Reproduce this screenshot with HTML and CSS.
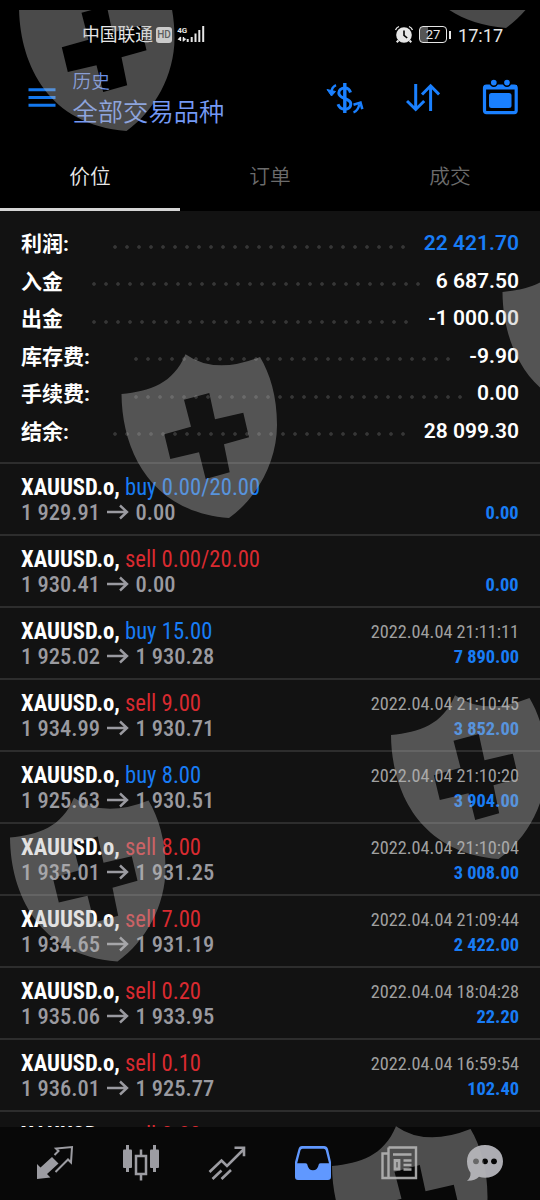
FILE: index.html
```html
<!DOCTYPE html>
<html lang="zh-CN">
<head>
<meta charset="utf-8">
<title>历史</title>
<link rel="stylesheet" href="styles.css">
</head>
<body>
<div class="app">
  <div class="status">
    <span class="carrier">中国联通</span>
    <span class="hd">HD</span>
    <svg class="signal" width="28" height="18" viewBox="177 25 28 18">
      <text x="177.200" y="32.800" class="net" textLength="10" lengthAdjust="spacingAndGlyphs">4G</text>
      <path d="M180.500 37v4M183.500 37v4" class="w1"/><path d="M177.500 39.500l3-3v4zM182.800 37.500l3.600 1.500-3.600 3z" fill="#e6e6e6"/>
      <path d="M187.700 39v3M191.700 37v5M195.500 33.500v8.500M199.300 30v12M203.200 26v16" class="w2"/>
    </svg>
    <svg class="alarm" width="20" height="20" viewBox="394 25 20 20">
      <circle cx="404" cy="35" r="7.800" fill="#e6e6e6"/>
      <path d="M398.500 40.500l-1.800 1.800M409.500 40.500l1.800 1.800" class="w2"/>
      <path d="M395.500 30q1-2.500 3.500-3.500M412.500 30q-1-2.500-3.500-3.500" class="w1"/>
      <path d="M404 30.500v4.800l3.200 2.700" fill="none" stroke="#000" stroke-width="1.600"/>
    </svg>
    <span class="battery">27</span><span class="nub"></span>
    <span class="clock">17:17</span>
  </div>

  <div class="header">
    <svg class="menu" width="28" height="20" viewBox="28 87 28 20"><path d="M28.500 89.700h27M28.500 97.500h27M28.500 105.200h27" stroke="#1478ee" stroke-width="3"/></svg>
    <div class="titles"><div class="t1">历史</div><div class="t2">全部交易品种</div></div>
    <div class="tools">
      <svg width="38" height="34" viewBox="326 80 38 34" fill="none" stroke="#1a80ff" stroke-width="3">
        <path d="M344.800 82v30" stroke-width="3.400"/>
        <path d="M350.500 91.500c-.8-3-3-4.500-5.700-4.500-3.500 0-6 2-6 5 0 6.500 12 4.500 12 11 0 3.200-2.500 5.200-6 5.200-3 0-5.500-1.500-6.800-5"/>
        <path d="M336 84.200c-3 1.300-4.500 3.500-4.800 8" stroke-width="2.400"/><path d="M327 88.500l8.500 2-4 4.500z" fill="#1a80ff" stroke-width="1"/>
        <path d="M353.500 111.300c3-1 5-3.500 5.800-8" stroke-width="2.400"/><path d="M353.500 103.800l7-2.200 1.800 6.500" stroke-width="2.600"/>
      </svg>
      <svg width="34" height="30" viewBox="406 83 34 30" fill="none" stroke="#1a80ff" stroke-width="3">
        <path d="M415.700 84v25M407 101l8.700 8.500 8.500-8.500M430.600 111V86M422 94.500l8.600-8.700 8.500 8.700"/>
      </svg>
      <svg width="36" height="36" viewBox="482 79 36 36">
        <rect x="484.500" y="86" width="31.700" height="26.600" rx="2" fill="none" stroke="#1a80ff" stroke-width="3.200"/>
        <path d="M484 85h33v4.500h-33z" fill="#1a80ff"/>
        <rect x="489" y="93" width="22.500" height="15" rx="2.500" fill="#1a80ff"/>
        <g fill="#1a80ff" stroke="#000" stroke-width="1.500"><circle cx="493.800" cy="82.600" r="3.600"/><circle cx="507" cy="82.600" r="3.600"/></g>
      </svg>
    </div>
  </div>

  <div class="tabs"><div class="tab on">价位</div><div class="tab">订单</div><div class="tab">成交</div></div>

  <div class="summary">
    <div class="sum"><span class="k k3">利润:</span><i class="dots" style="width:300px"></i><span class="v blue">22 421.70</span></div>
    <div class="sum"><span class="k k2">入金</span><i class="dots" style="width:336px"></i><span class="v">6 687.50</span></div>
    <div class="sum"><span class="k k2">出金</span><i class="dots" style="width:324px"></i><span class="v">-1 000.00</span></div>
    <div class="sum"><span class="k k4">库存费:</span><i class="dots" style="width:324px"></i><span class="v">-9.90</span></div>
    <div class="sum"><span class="k k4">手续费:</span><i class="dots" style="width:336px"></i><span class="v">0.00</span></div>
    <div class="sum"><span class="k k3">结余:</span><i class="dots" style="width:300px"></i><span class="v">28 099.30</span></div>
  </div>

  <div class="deals">
    <div class="deal"><div class="l"><div class="a"><b>XAUUSD.o,</b> <span class="buy">buy 0.00/20.00</span></div><div class="p"><span>1 929.91</span><svg class="arr" viewBox="0 0 22 16"><path d="M0 8h20M13 1.500L20 8l-7 6.500"/></svg><span>0.00</span></div></div><div class="r"><div class="d"></div><div class="g">0.00</div></div></div>
    <div class="deal"><div class="l"><div class="a"><b>XAUUSD.o,</b> <span class="sell">sell 0.00/20.00</span></div><div class="p"><span>1 930.41</span><svg class="arr" viewBox="0 0 22 16"><path d="M0 8h20M13 1.500L20 8l-7 6.500"/></svg><span>0.00</span></div></div><div class="r"><div class="d"></div><div class="g">0.00</div></div></div>
    <div class="deal"><div class="l"><div class="a"><b>XAUUSD.o,</b> <span class="buy">buy 15.00</span></div><div class="p"><span>1 925.02</span><svg class="arr" viewBox="0 0 22 16"><path d="M0 8h20M13 1.500L20 8l-7 6.500"/></svg><span>1 930.28</span></div></div><div class="r"><div class="d">2022.04.04 21:11:11</div><div class="g">7 890.00</div></div></div>
    <div class="deal"><div class="l"><div class="a"><b>XAUUSD.o,</b> <span class="sell">sell 9.00</span></div><div class="p"><span>1 934.99</span><svg class="arr" viewBox="0 0 22 16"><path d="M0 8h20M13 1.500L20 8l-7 6.500"/></svg><span>1 930.71</span></div></div><div class="r"><div class="d">2022.04.04 21:10:45</div><div class="g">3 852.00</div></div></div>
    <div class="deal"><div class="l"><div class="a"><b>XAUUSD.o,</b> <span class="buy">buy 8.00</span></div><div class="p"><span>1 925.63</span><svg class="arr" viewBox="0 0 22 16"><path d="M0 8h20M13 1.500L20 8l-7 6.500"/></svg><span>1 930.51</span></div></div><div class="r"><div class="d">2022.04.04 21:10:20</div><div class="g">3 904.00</div></div></div>
    <div class="deal"><div class="l"><div class="a"><b>XAUUSD.o,</b> <span class="sell">sell 8.00</span></div><div class="p"><span>1 935.01</span><svg class="arr" viewBox="0 0 22 16"><path d="M0 8h20M13 1.500L20 8l-7 6.500"/></svg><span>1 931.25</span></div></div><div class="r"><div class="d">2022.04.04 21:10:04</div><div class="g">3 008.00</div></div></div>
    <div class="deal"><div class="l"><div class="a"><b>XAUUSD.o,</b> <span class="sell">sell 7.00</span></div><div class="p"><span>1 934.65</span><svg class="arr" viewBox="0 0 22 16"><path d="M0 8h20M13 1.500L20 8l-7 6.500"/></svg><span>1 931.19</span></div></div><div class="r"><div class="d">2022.04.04 21:09:44</div><div class="g">2 422.00</div></div></div>
    <div class="deal"><div class="l"><div class="a"><b>XAUUSD.o,</b> <span class="sell">sell 0.20</span></div><div class="p"><span>1 935.06</span><svg class="arr" viewBox="0 0 22 16"><path d="M0 8h20M13 1.500L20 8l-7 6.500"/></svg><span>1 933.95</span></div></div><div class="r"><div class="d">2022.04.04 18:04:28</div><div class="g">22.20</div></div></div>
    <div class="deal"><div class="l"><div class="a"><b>XAUUSD.o,</b> <span class="sell">sell 0.10</span></div><div class="p"><span>1 936.01</span><svg class="arr" viewBox="0 0 22 16"><path d="M0 8h20M13 1.500L20 8l-7 6.500"/></svg><span>1 925.77</span></div></div><div class="r"><div class="d">2022.04.04 16:59:54</div><div class="g">102.40</div></div></div>
    <div class="deal"><div class="l"><div class="a"><b>XAUUSD.o,</b> <span class="sell">sell 0.20</span></div></div></div>
  </div>

  <div class="nav">
    <svg width="40" height="40" viewBox="35 1143 40 40"><path d="M37 1164l3.500 3.500 11.500-10.500 6.500 6.500-11.500 10.500 3.500 3.500L37 1179z" fill="#9c9ca2"/><path d="M54.500 1155l4-4-2.500-2.500 16-1.500-1 15.500-3-3-12.500 12.500" fill="none" stroke="#9c9ca2" stroke-width="2"/></svg>
    <svg width="40" height="40" viewBox="121 1143 40 40"><g fill="#9c9ca2"><path d="M126 1145h3v27h-3zM153 1145h3v27h-3z"/><rect x="123" y="1149.500" width="9" height="18.500" rx="1"/><rect x="150" y="1149.500" width="9" height="18.500" rx="1"/></g><path d="M141 1149.500v6.500M141 1174v6.500M136 1156h10v18h-10z" fill="none" stroke="#9c9ca2" stroke-width="2.500"/></svg>
    <svg width="40" height="40" viewBox="207 1143 40 40"><path d="M209.500 1172l12-11.500 5.500 5.500 17-17M234.500 1147.800h9.500v8.500M212.500 1179l9-8.500M221.500 1179l9.500-9" fill="none" stroke="#9c9ca2" stroke-width="2.600"/></svg>
    <svg width="40" height="40" viewBox="293 1143 40 40"><path fill-rule="evenodd" fill="#6098ff" d="M302 1146h22q3 0 4 3l3 13v15q0 3-3 3h-30q-3 0-3-3v-15l3.500-13q.8-3 3.500-3zM302.500 1148.700q-1.500 0-2 1.600l-3.300 12.900h8.300q2 0 2 2 1 5 5.500 5t5.500-5q0-2 2-2h8.500l-3.300-12.900q-.5-1.600-2-1.600z"/></svg>
    <svg width="40" height="40" viewBox="379 1143 40 40"><path d="M388.500 1147.500h27.500v30.500h-33.500v-24.500h6M388.500 1147.500v30M393 1154.500h18.500M403.500 1160.500h8M403.500 1165h8M403.500 1169.500h8" fill="none" stroke="#a2a2a2" stroke-width="2.400"/><path d="M395 1160.500h4v8.500h-4z" fill="none" stroke="#a2a2a2" stroke-width="2.800"/></svg>
    <svg width="40" height="40" viewBox="465 1143 40 40"><path d="M485 1145c10.500 0 18 7 18 16.300s-7.500 16.500-18 16.500c-2 0-4-.3-6-1-2.500 3-7 4.200-12 4 2.500-2 3.800-4.500 3.500-8-2.300-3-3.500-7-3.500-11.500 0-9.300 7.500-16.300 18-16.300z" fill="#acacb2"/><g fill="#050505"><circle cx="476" cy="1161.300" r="2.900" fill="#333"/><circle cx="485" cy="1161.300" r="2.900"/><circle cx="494" cy="1161.300" r="2.900"/></g></svg>
  </div>

  <svg class="marks" width="540" height="1190" viewBox="0 10 540 1190">
    <defs><path id="shield" fill-rule="evenodd" d="M121.500 394C150 391 173 384 185.500 354.200Q215 375 260 357C270 374 277 396 277 425C277 462 257 498 229 518C150 512 122 450 121.500 394ZM184 399.700L209.300 393L215 419.300L243.300 412.700L249 437.300L224 444.300L229.700 472.300L205.700 479L199 452.300L170.300 459L164.300 434.300L191 426.700Z"/></defs>
    <use href="#shield"/>
    <use href="#shield" x="-111.500" y="443.500"/>
    <use href="#shield" x="269.500" y="341"/>
    <use href="#shield" x="-102.500" y="-387"/>
    <use href="#shield" x="277" y="-490"/>
    <use href="#shield" x="381" y="-102"/>
    <use href="#shield" x="210.500" y="772"/>
  </svg>
</div>
</body>
</html>
```

FILE: styles.css
```css
* { box-sizing: border-box; }
body { margin: 0; background: #000; }
.app {
  position: relative;
  width: 540px;
  height: 1200px;
  overflow: hidden;
  display: flex;
  flex-direction: column;
  background: #121212;
  color: #fff;
  font-family: Roboto, "Noto Sans CJK SC", sans-serif;
}
.status {
  flex: none;
  height: 68px;
  padding: 2px 38px 0 82px;
  display: flex;
  align-items: center;
  background: #000;
  color: #e6e6e6;
}
.carrier { font-size: 17.8px; line-height: 24px; width: 74px; white-space: nowrap; }
.hd {
  width: 16px; height: 16px; border-radius: 3px;
  background: #d8d8d8; color: #222;
  font-size: 10px; font-weight: 500; line-height: 16px; text-align: center;
}
.signal { margin: -2px 0 0 5px; }
.net { font: bold 8px Roboto, sans-serif; fill: #e6e6e6; }
.w1 { stroke: #e6e6e6; stroke-width: 1.3; fill: none; }
.w2 { stroke: #e6e6e6; stroke-width: 2; fill: none; }
.alarm { margin-left: auto; }
.battery {
  width: 28px; height: 17px; margin: -1px 0 0 5px;
  border: 1.5px solid #e6e6e6; border-radius: 4px;
  background: linear-gradient(90deg, #555 32%, #000 32%);
  font-size: 13px; line-height: 15px; text-align: center;
}
.nub { width: 2px; height: 8px; margin-left: 2px; background: #e6e6e6; }
.clock { margin-left: 7px; font-size: 18.1px; width: 44px; }
.header {
  flex: none;
  height: 74px;
  padding: 0 22px 0 28px;
  display: flex;
  background: #000;
}
.menu { margin-top: 19px; }
.titles { margin: -1px 0 0 16.5px; font-family: "Noto Sans CJK SC", sans-serif; font-weight: 350; }
.t1 { font-size: 18.7px; line-height: 26px; color: #6a8ee6; }
.t2 { font-size: 25.3px; line-height: 34px; color: #7499f5; }
.tools { margin-left: auto; display: flex; align-items: flex-start; padding-top: 11px; }
.tools svg:nth-child(1) { margin: 2px 42px 0 0; }
.tools svg:nth-child(2) { margin: 4px 42px 0 0; }
.tabs { flex: none; height: 69px; display: flex; background: #000; }
.tab {
  width: 180px; height: 69px;
  text-align: center; font-size: 20.7px; line-height: 67px;
  font-family: "Noto Sans CJK SC", sans-serif; font-weight: 350;
  color: #6c6c6c;
}
.tab.on { color: #e8e8e8; border-bottom: 3px solid #d4d4d4; }
.summary { flex: none; height: 251px; padding: 13.5px 21px 0; }
.sum { height: 37.5px; display: flex; align-items: center; }
.k { margin-top: 1.5px; font: bold 21px/30px Roboto, "Noto Sans CJK SC", sans-serif; white-space: nowrap; }
.k2 { width: 67px; }
.k3 { width: 88px; }
.k4 { width: 109px; }
.dots {
  height: 6px; margin-top: 7px;
  background: radial-gradient(circle at center, #363636 1.4px, transparent 2.2px) 0 0 / 12px 6px repeat-x;
}
.v { margin-left: auto; font-size: 21px; font-weight: 600; white-space: nowrap; }
.blue, .buy, .g { color: #187cf5; }
.sell { color: #d92a30; }
.deals { flex: 1; min-height: 0; overflow: hidden; }
.deal {
  height: 72px; padding: 10px 21px 0;
  border-top: 2px solid #2d2d2d;
  display: flex; justify-content: space-between;
  font-family: "Roboto Condensed", Roboto, sans-serif;
  font-stretch: 75%;
  white-space: nowrap;
}
.a { font-size: 23.7px; line-height: 26px; transform: scaleX(.955); transform-origin: 0 50%; }
.p { font-size: 22.5px; line-height: 24px; font-weight: 500; color: #9a9aa0; display: flex; align-items: center; }
.arr { width: 22px; height: 16px; margin: 0 6.5px 0 7px; fill: none; stroke: #9a9aa0; stroke-width: 2.4; }
.r { text-align: right; padding-top: 1px; }
.d { font-size: 19.2px; line-height: 25px; height: 25px; color: #a0a0a0; transform: scaleX(.95); transform-origin: 100% 50%; }
.g { font-size: 19.2px; line-height: 26px; font-weight: 700; transform: scaleX(.96); transform-origin: 100% 50%; }
.nav {
  flex: none; height: 73px; padding: 16px 35px 0;
  display: flex; justify-content: space-between; align-items: flex-start;
  background: #080808;
}
.marks { position: absolute; left: 0; top: 10px; fill: #b8b8b8; opacity: .4; pointer-events: none; }
```
